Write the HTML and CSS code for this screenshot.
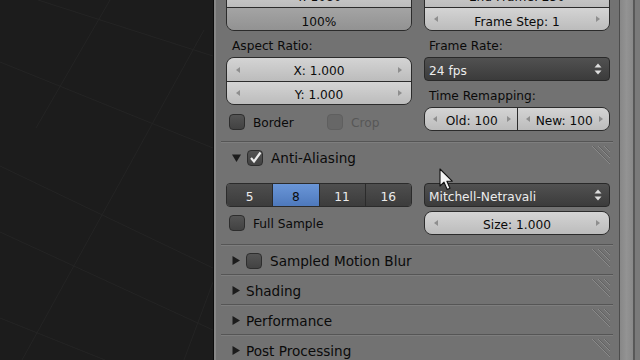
FILE: index.html
```html
<!DOCTYPE html>
<html lang="en">
<head>
    <meta charset="UTF-8">
    <meta name="viewport" content="width=device-width, initial-scale=1.0">
    <title>Render Properties</title>
    <link rel="stylesheet" href="styles.css">
</head>
<body>
    <div class="viewport">
        <svg class="grid" width="213" height="360" viewBox="0 0 213 360">
            <g stroke="#242424" stroke-width="1" fill="none">
                <line x1="38" y1="0" x2="213" y2="56"/>
                <line x1="0" y1="62" x2="213" y2="148"/>
                <line x1="0" y1="166" x2="213" y2="268"/>
                <line x1="0" y1="232" x2="213" y2="330"/>
                <line x1="0" y1="318" x2="105" y2="360"/>
                <line x1="204" y1="30" x2="22" y2="360"/>
                <line x1="213" y1="282" x2="184" y2="360"/>
                <line x1="110" y1="0" x2="36" y2="128"/>
            </g>
        </svg>
    </div>

    <div class="panel">
        <!-- Dimensions (scrolled, top cut off) -->
        <section class="section dims">
            <div class="cols">
                <div class="col">
                    <div class="group stack top">
                        <div class="field num"><span>Y: 1080</span></div>
                        <div class="field slider"><span>100%</span></div>
                    </div>
                    <div class="label">Aspect Ratio:</div>
                    <div class="group stack">
                        <div class="field num"><span>X: 1.000</span></div>
                        <div class="field num"><span>Y: 1.000</span></div>
                    </div>
                    <div class="checks">
                        <div class="check first"><i class="box"></i><span>Border</span></div>
                        <div class="check muted"><i class="box off"></i><span>Crop</span></div>
                    </div>
                </div>
                <div class="col">
                    <div class="group stack top">
                        <div class="field num"><span>End Frame: 250</span></div>
                        <div class="field num"><span>Frame Step: 1</span></div>
                    </div>
                    <div class="label">Frame Rate:</div>
                    <div class="menu">
                        <span>24 fps</span>
                        <svg width="8" height="12" viewBox="0 0 8 12"><path d="M4 0.5 L7.5 4.5 L0.5 4.5 Z M0.5 7.5 L7.5 7.5 L4 11.5 Z" fill="#dedede"/></svg>
                    </div>
                    <div class="label second">Time Remapping:</div>
                    <div class="group pair">
                        <div class="field num"><span>Old: 100</span></div>
                        <div class="field num"><span>New: 100</span></div>
                    </div>
                </div>
            </div>
        </section>

        <!-- Anti-Aliasing -->
        <section class="section">
            <div class="header">
                <svg class="tri" width="9" height="8" viewBox="0 0 9 8"><path d="M0 0.5 L9 0.5 L4.5 8 Z" fill="#1c1c1c"/></svg>
                <i class="box"><svg width="14" height="14" viewBox="0 0 14 14"><path d="M3 7 L6 10.5 L12.5 1.5" stroke="#ececec" stroke-width="2.2" fill="none"/></svg></i>
                <span class="title">Anti-Aliasing</span>
                <svg class="grip" width="20" height="18" viewBox="0 0 20 18"><g fill="none" stroke-width="1"><path d="M2 0 L20 18 M8 0 L20 12 M14 0 L20 6" stroke="#8a8a8a"/><path d="M3 0 L20 17 M9 0 L20 11 M15 0 L20 5" stroke="#626262"/></g></svg>
            </div>
            <div class="aa-body">
                <div class="radio">
                    <span>5</span>
                    <span class="on">8</span>
                    <span>11</span>
                    <span>16</span>
                </div>
                <div class="menu">
                    <span>Mitchell-Netravali</span>
                    <svg width="8" height="12" viewBox="0 0 8 12"><path d="M4 0.5 L7.5 4.5 L0.5 4.5 Z M0.5 7.5 L7.5 7.5 L4 11.5 Z" fill="#dedede"/></svg>
                </div>
                <div class="checks">
                    <div class="check"><i class="box"></i><span>Full Sample</span></div>
                </div>
                <div class="group">
                    <div class="field num"><span>Size: 1.000</span></div>
                </div>
            </div>
        </section>

        <!-- Closed panels -->
        <section class="section">
            <div class="header">
                <svg class="tri" width="8" height="9" viewBox="0 0 8 9"><path d="M0.5 0 L8 4.5 L0.5 9 Z" fill="#1c1c1c"/></svg>
                <i class="box"></i>
                <span class="title">Sampled Motion Blur</span>
                <svg class="grip" width="20" height="18" viewBox="0 0 20 18"><g fill="none" stroke-width="1"><path d="M2 0 L20 18 M8 0 L20 12 M14 0 L20 6" stroke="#8a8a8a"/><path d="M3 0 L20 17 M9 0 L20 11 M15 0 L20 5" stroke="#626262"/></g></svg>
            </div>
        </section>
        <section class="section">
            <div class="header">
                <svg class="tri" width="8" height="9" viewBox="0 0 8 9"><path d="M0.5 0 L8 4.5 L0.5 9 Z" fill="#1c1c1c"/></svg>
                <span class="title">Shading</span>
                <svg class="grip" width="20" height="18" viewBox="0 0 20 18"><g fill="none" stroke-width="1"><path d="M2 0 L20 18 M8 0 L20 12 M14 0 L20 6" stroke="#8a8a8a"/><path d="M3 0 L20 17 M9 0 L20 11 M15 0 L20 5" stroke="#626262"/></g></svg>
            </div>
        </section>
        <section class="section">
            <div class="header">
                <svg class="tri" width="8" height="9" viewBox="0 0 8 9"><path d="M0.5 0 L8 4.5 L0.5 9 Z" fill="#1c1c1c"/></svg>
                <span class="title">Performance</span>
                <svg class="grip" width="20" height="18" viewBox="0 0 20 18"><g fill="none" stroke-width="1"><path d="M2 0 L20 18 M8 0 L20 12 M14 0 L20 6" stroke="#8a8a8a"/><path d="M3 0 L20 17 M9 0 L20 11 M15 0 L20 5" stroke="#626262"/></g></svg>
            </div>
        </section>
        <section class="section">
            <div class="header">
                <svg class="tri" width="8" height="9" viewBox="0 0 8 9"><path d="M0.5 0 L8 4.5 L0.5 9 Z" fill="#1c1c1c"/></svg>
                <span class="title">Post Processing</span>
                <svg class="grip" width="20" height="18" viewBox="0 0 20 18"><g fill="none" stroke-width="1"><path d="M2 0 L20 18 M8 0 L20 12 M14 0 L20 6" stroke="#8a8a8a"/><path d="M3 0 L20 17 M9 0 L20 11 M15 0 L20 5" stroke="#626262"/></g></svg>
            </div>
        </section>
    </div>

    <div class="scroll"></div>
    <div class="edge"></div>

    <!-- Mouse pointer -->
    <svg class="cursor" width="16" height="23" viewBox="0 0 16 23">
        <path d="M1 1 L1 18 L5 14.2 L8.2 21.5 L11 20.3 L7.9 13.2 L13.2 13.2 Z" fill="#f4f4f4" stroke="#111" stroke-width="1.1" stroke-linejoin="round"/>
    </svg>
</body>
</html>
```

FILE: styles.css
```css
* {
    margin: 0;
    padding: 0;
    box-sizing: border-box;
}

body {
    position: relative;
    display: flex;
    height: 360px;
    overflow: hidden;
    background: #727272;
    font-family: "DejaVu Sans", sans-serif;
    font-size: 12.2px;
    color: #0a0a0a;
}

.viewport {
    width: 214px;
    flex: none;
    background: #1c1c1c;
    border-right: 1px solid #0c0c0c;
}

.grid {
    display: block;
}

.panel {
    width: 405px;
    flex: none;
    border-left: 2px solid #878787;
    overflow: hidden;
}

.scroll {
    width: 16px;
    flex: none;
    border-left: 1px solid #4c4c4c;
    border-right: 2px solid #585858;
    background: linear-gradient(90deg, #878787, #939393 50%, #898989);
}

.edge {
    flex: 1;
    background: #7a7a7a;
}

/* Sections */
.section {
    margin: 0 6px 0 5px;
    padding: 0 3px 0 5px;
    border-top: 1px solid #555;
}

.dims {
    border-top: none;
    margin-top: -17px;
    padding-bottom: 7px;
}

.cols {
    display: grid;
    grid-template-columns: 1fr 1fr;
    column-gap: 12px;
}

.col {
    display: flex;
    flex-direction: column;
}

.label {
    height: 20px;
    line-height: 20px;
    margin-top: 5px;
    margin-bottom: 1px;
    padding-left: 6px;
}

.col:last-child .label {
    padding-left: 5px;
}

/* Fields */
.group {
    border: 1px solid #2b2b2b;
    border-radius: 8px;
    overflow: hidden;
}

.field {
    height: 22px;
    display: flex;
    align-items: center;
    padding: 0 9px;
    white-space: nowrap;
}

.field span {
    flex: 1;
    text-align: center;
    padding-top: 3px;
}

.stack .field {
    height: 23px;
}

.stack .field + .field {
    border-top: 1px solid #2b2b2b;
}

.top .field + .field span {
    padding-top: 6px;
}

.pair {
    display: flex;
}

.pair .field {
    flex: 1;
    padding: 0 6px 0 8px;
}

.pair .field + .field {
    border-left: 1px solid #2b2b2b;
}

.num {
    background: linear-gradient(#d4d4d4, #bcbcbc);
}

.num::before,
.num::after {
    content: "";
    border-style: solid;
    border-color: transparent;
}

.num::before {
    border-width: 3px 4px 3px 0;
    border-right-color: #8e8e8e;
}

.num::after {
    border-width: 3px 0 3px 4px;
    border-left-color: #8e8e8e;
}

.slider {
    background: linear-gradient(#a4a4a4, #929292);
}

.menu {
    height: 24px;
    display: flex;
    align-items: center;
    justify-content: space-between;
    padding: 0 7px 0 4px;
    border: 1px solid #292929;
    border-radius: 4px;
    background: linear-gradient(#515151, #3b3b3b);
    color: #ececec;
}

.menu span {
    padding-top: 3px;
}

.menu svg {
    display: block;
}

.label.second {
    margin-top: 5px;
}

/* Checkboxes */
.checks {
    display: flex;
    align-items: center;
    height: 25px;
    margin-top: 4px;
}

.check {
    display: flex;
    align-items: center;
    gap: 8px;
    padding-left: 3px;
}

.check span {
    padding-top: 2px;
}

.check.first {
    width: 98px;
}

.box {
    width: 16px;
    height: 16px;
    flex: none;
    display: flex;
    align-items: center;
    justify-content: center;
    border: 1px solid #2d2d2d;
    border-radius: 4px;
    background: linear-gradient(#545454, #424242);
}

.box.off {
    background: #676767;
    border-color: #5f5f5f;
}

.muted {
    color: #575757;
}

/* Panel headers */
.header {
    display: flex;
    align-items: center;
    height: 29px;
    margin: 0 -3px 0 -5px;
    padding: 1px 3px 0 11px;
    border-top: 1px solid #7e7e7e;
    font-size: 13.6px;
}

.header .tri {
    flex: none;
    margin-right: 6px;
}

.header .box {
    margin-right: 8px;
}

.header .grip {
    margin-left: auto;
    margin-top: -6px;
}

/* Anti-Aliasing body */
.aa-body {
    display: grid;
    grid-template-columns: 1fr 1fr;
    gap: 4px 12px;
    padding: 12px 0 9px;
}

.aa-body .checks {
    height: 24px;
    margin-top: 0;
}

.radio {
    display: flex;
    height: 24px;
    border: 1px solid #2b2b2b;
    border-radius: 4px;
    overflow: hidden;
}

.radio span {
    flex: 1;
    display: flex;
    align-items: center;
    justify-content: center;
    padding-top: 3px;
    background: linear-gradient(#4e4e4e, #3c3c3c);
    color: #ececec;
}

.radio span + span {
    border-left: 1px solid #2b2b2b;
}

.radio .on {
    background: linear-gradient(#6a96d8, #4e79bc);
    color: #0d0d0d;
}

.cursor {
    position: absolute;
    left: 439px;
    top: 168px;
}
```
